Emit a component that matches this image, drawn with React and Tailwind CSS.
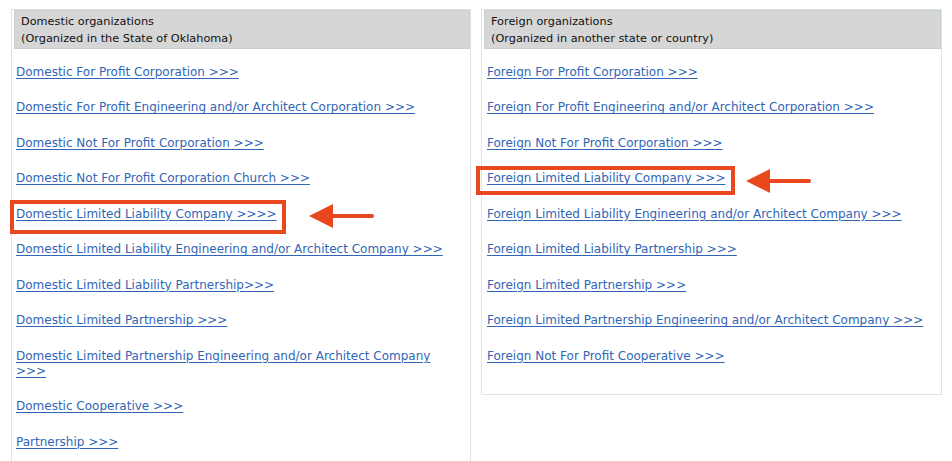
import React from "react";

const domestic = [
  "Domestic For Profit Corporation >>>",
  "Domestic For Profit Engineering and/or Architect Corporation >>>",
  "Domestic Not For Profit Corporation >>>",
  "Domestic Not For Profit Corporation Church >>>",
  "Domestic Limited Liability Company >>>>",
  "Domestic Limited Liability Engineering and/or Architect Company >>>",
  "Domestic Limited Liability Partnership>>>",
  "Domestic Limited Partnership >>>",
  ["Domestic Limited Partnership Engineering and/or Architect Company", ">>>"],
  "Domestic Cooperative >>>",
  "Partnership >>>",
];

const foreign = [
  "Foreign For Profit Corporation >>>",
  "Foreign For Profit Engineering and/or Architect Corporation >>>",
  "Foreign Not For Profit Corporation >>>",
  "Foreign Limited Liability Company >>>",
  "Foreign Limited Liability Engineering and/or Architect Company >>>",
  "Foreign Limited Liability Partnership >>>",
  "Foreign Limited Partnership >>>",
  "Foreign Limited Partnership Engineering and/or Architect Company >>>",
  "Foreign Not For Profit Cooperative >>>",
];

function Arrow({ className }) {
  return (
    <svg className={className} width="66" height="26" viewBox="0 0 66 26">
      <path d="M22 13 H63" stroke="#e9471d" strokeWidth="4" strokeLinecap="round" />
      <path d="M0 13 L24 1 L24 25 Z" fill="#e9471d" />
    </svg>
  );
}

function Panel({ title, subtitle, items, highlight, box, arrow, className, listPad }) {
  return (
    <div className={`border border-[#e2e2e2] ${className}`}>
      <div className="ml-[2px] border border-[#c6d3cc] bg-[#d6d6d6] pl-[6px] pt-[1.5px] pb-[1.5px] leading-[17px] text-[#111] text-[11.3px]">
        <div>{title}</div>
        <div>{subtitle}</div>
      </div>
      <div className={`flex flex-col gap-[20.5px] pt-[15.5px] ${listPad}`}>
        {items.map((t, i) => (
          <div key={i} className="relative leading-[15px]">
            <a href="#" className="text-[#3165b6] underline underline-offset-[2px] decoration-[1px]">
              {Array.isArray(t) ? (
                <>
                  {t[0]}
                  <br />
                  {t[1]}
                </>
              ) : (
                t
              )}
            </a>
            {i === highlight && (
              <>
                <span className={`absolute border-[4px] border-[#e9471d] ${box}`} />
                <Arrow className={`absolute ${arrow}`} />
              </>
            )}
          </div>
        ))}
      </div>
    </div>
  );
}

export default function App() {
  return (
    <div className="w-[952px] h-[461px] overflow-hidden bg-white font-['Verdana','DejaVu_Sans',sans-serif] text-[12px]">
      <div className="flex items-start gap-[10px] pt-[9px] pl-[11px]">
        <Panel
          className="w-[460px] h-[470px]"
          listPad="pl-[4px] pr-[4px]"
          title="Domestic organizations"
          subtitle="(Organized in the State of Oklahoma)"
          items={domestic}
          highlight={4}
          box="left-[-6px] top-[-7px] w-[276px] h-[34px]"
          arrow="left-[293px] top-[-4px]"
        />
        <Panel
          className="w-[461px] pb-[30px]"
          listPad="pl-[5px] pr-[4px]"
          title="Foreign organizations"
          subtitle="(Organized in another state or country)"
          items={foreign}
          highlight={3}
          box="left-[-11px] top-[-5px] w-[259px] h-[29px]"
          arrow="left-[259px] top-[-3px]"
        />
      </div>
    </div>
  );
}
